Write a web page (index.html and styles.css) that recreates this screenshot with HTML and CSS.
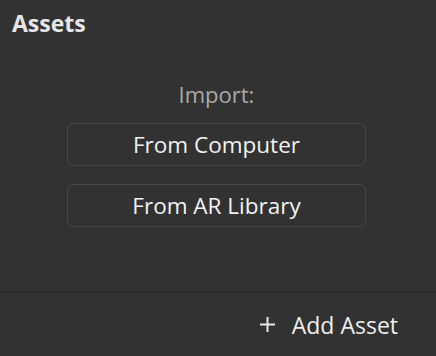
FILE: index.html
```html
<!DOCTYPE html>
<html lang="en">

<head>
    <meta charset="UTF-8">
    <meta name="viewport" content="width=device-width, initial-scale=1.0">
    <title>Assets</title>
    <link rel="stylesheet" href="styles.css">
</head>

<body>
    <div class="panel">
        <h1 class="panel-title">Assets</h1>
        <div class="import">
            <div class="import-label">Import:</div>
            <button type="button" class="import-btn">From Computer</button>
            <button type="button" class="import-btn">From AR Library</button>
        </div>
        <div class="footer">
            <button type="button" class="add-btn">
                <svg class="add-icon" width="17" height="17" viewBox="0 0 17 17">
                    <path d="M8.5 1v15M1 8.5h15" stroke="#e8e8e8" stroke-width="2" fill="none" />
                </svg>
                Add Asset
            </button>
        </div>
    </div>
</body>

</html>
```

FILE: styles.css
```css
body {
    margin: 0;
    padding: 0;
    background-color: #323232;
    font-family: "Open Sans", "Noto Sans", sans-serif;
}

.panel {
    width: 436px;
    height: 356px;
    display: flex;
    flex-direction: column;
    background-color: #323232;
}

.panel-title {
    margin: 0;
    padding: 7px 12px 0;
    font-size: 23px;
    line-height: 32px;
    font-weight: bold;
    color: #e6e6e6;
}

.import {
    flex: 1;
    display: flex;
    flex-direction: column;
    align-items: center;
    padding-top: 40px;
    padding-right: 3px;
}

.import-label {
    font-size: 22px;
    line-height: 30px;
    color: #a9a9a9;
    margin-bottom: 14px;
}

.import-btn {
    width: 299px;
    height: 43px;
    margin-bottom: 18px;
    padding: 0;
    background-color: #323232;
    border: 1px solid #474747;
    border-radius: 6px;
    color: #f2f2f2;
    font-family: inherit;
    font-size: 22.5px;
    cursor: pointer;
}

.footer {
    border-top: 2px solid #2a2a2a;
    height: 63px;
    display: flex;
    justify-content: flex-end;
    align-items: center;
    padding-right: 38px;
}

.add-btn {
    display: flex;
    align-items: center;
    gap: 16px;
    background: none;
    border: none;
    padding: 0;
    color: #eeeeee;
    font-family: inherit;
    font-size: 23px;
    cursor: pointer;
}
```
